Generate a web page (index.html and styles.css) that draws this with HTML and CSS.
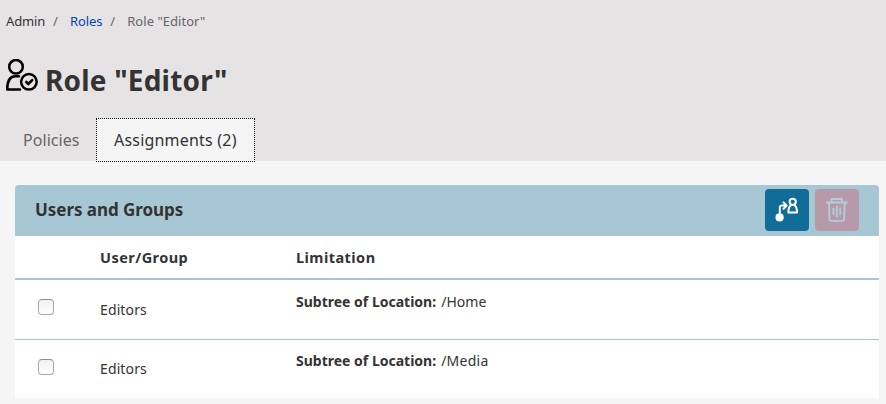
FILE: index.html
```html
<!DOCTYPE html>
<html lang="en">
<head>
<meta charset="utf-8">
<title>Role "Editor"</title>
<link rel="stylesheet" href="styles.css">
</head>
<body>
<header class="page-header">
  <nav class="breadcrumb">
    <span class="crumb-root">Admin</span><span class="sep">/</span><a class="crumb-link" href="#">Roles</a><span class="sep">/</span><span class="crumb-current">Role "Editor"</span>
  </nav>
  <div class="title-row">
    <svg class="title-icon" viewBox="0 0 32 32" fill="none" stroke="#000" stroke-width="2.5" stroke-linecap="round" stroke-linejoin="round">
      <circle cx="10" cy="7.8" r="6.8"/>
      <path d="M13 17.3H9.5C4.5 17.3 1.2 21 1.2 30.5H14"/>
      <circle cx="22.9" cy="22.8" r="7.8"/>
      <path d="M20.3 23l2 2 3.9-3.9" stroke-width="2.6"/>
    </svg>
    <h1 class="title">Role "Editor"</h1>
  </div>
  <div class="tabs">
    <a class="tab" href="#">Policies</a>
    <a class="tab tab-active" href="#">Assignments (2)</a>
  </div>
</header>
<main class="panel">
  <div class="panel-head">
    <h2 class="panel-title">Users and Groups</h2>
    <button class="btn btn-assign" aria-label="Assign">
      <svg width="24" height="26" viewBox="0 0 24 26" fill="none" stroke="#fff" stroke-width="2" stroke-linejoin="round" stroke-linecap="round">
        <circle cx="4.6" cy="20.4" r="4.1" fill="#fff" stroke="none"/>
        <path d="M4.8 18v-7.2q0-2.2 2.2-2.2h4.5M8.5 5.4l3.2 3.2-3.2 3.2"/>
        <circle cx="17.7" cy="4.8" r="3.1"/>
        <path d="M16 8.3c-2 1-2.6 4-2.6 7.2h8.6c0-3.2-.6-6.2-2.6-7.2"/>
      </svg>
    </button>
    <button class="btn btn-delete" aria-label="Delete">
      <svg width="24" height="26" viewBox="0 0 24 26" fill="none" stroke="#b5cedb" stroke-width="1.8" stroke-linejoin="round">
        <path d="M1 5.5h21.6M6.5 5V2h10.6V5M4 6l.5 16.6q0 1.2 1.2 1.2h12.2q1.2 0 1.2-1.2l.5-16.6"/>
        <path d="M8.5 10.8v7.4M11.8 8.8v11.4M15.2 10.8v7.4" stroke-width="1.8"/>
      </svg>
    </button>
  </div>
  <div class="row row-head"><span></span><span>User/Group</span><span>Limitation</span></div>
  <div class="row"><input class="check" type="checkbox" aria-label="Editors"><span class="name">Editors</span><span class="limit"><b>Subtree of Location:</b><span class="path">/Home</span></span></div>
  <div class="row row-last"><input class="check" type="checkbox" aria-label="Editors"><span class="name">Editors</span><span class="limit"><b>Subtree of Location:</b><span class="path">/Media</span></span></div>
</main>
</body>
</html>
```
FILE: styles.css
```css
* { box-sizing: border-box; }
body {
  margin: 0;
  height: 404px;
  overflow: hidden;
  background: #f5f5f5;
  color: #333;
  font: 14px/20px "Noto Sans", sans-serif;
}
a { text-decoration: none; }
.page-header { height: 161px; background: #e5e3e4; }
.breadcrumb {
  display: flex;
  height: 43px;
  padding: 11px 0 0 6px;
  font-size: 13px;
  letter-spacing: -.05px;
  color: #666;
}
.crumb-root { color: #333; letter-spacing: -.15px; }
.crumb-link { color: #0645ad; letter-spacing: -.15px; }
.crumb-current { letter-spacing: .03px; }
.sep { width: 25px; padding-left: 8px; }
.title-row { display: flex; height: 75px; padding: 16px 0 0 6px; }
.title-icon { width: 32px; height: 32px; }
.title {
  margin: 1px 0 0 7px;
  font-size: 28px;
  line-height: 40px;
  letter-spacing: .2px;
}
.tabs { display: flex; height: 44px; padding-left: 5px; }
.tab {
  width: 92px;
  padding: 11px 0 0 18px;
  font-size: 16px;
  line-height: 22px;
  letter-spacing: .05px;
  color: #666;
}
.tab-active {
  width: 159px;
  padding: 10px 0 0 17px;
  margin-left: -1px;
  border: 1px dotted #111;
  background: #f5f5f5;
  color: #333;
  letter-spacing: .2px;
}
.panel {
  width: 864px;
  margin: 24px 0 0 15px;
  background: #fff;
  border-radius: 4px 4px 0 0;
  overflow: hidden;
}
.panel-head {
  display: flex;
  gap: 6px;
  height: 51px;
  padding: 4px 20px 0;
  background: #a8c7d4;
}
.panel-title {
  flex: 1;
  margin: 9px 0 0;
  font-size: 17px;
  line-height: 24px;
  letter-spacing: -.05px;
}
.btn {
  width: 44px;
  height: 42px;
  padding: 0;
  border: 0;
  border-radius: 4px;
  display: flex;
  align-items: center;
  justify-content: center;
}
.btn-assign { background: #116d98; }
.btn-delete { background: #b79aaa; }
.row {
  display: grid;
  grid-template-columns: 85px 196px 1fr;
  height: 60px;
  border-bottom: 1px solid #a8c7d4;
}
.row-head {
  height: 44px;
  padding-top: 11px;
  border-bottom-width: 2px;
  font-size: 14.5px;
  font-weight: 700;
  letter-spacing: .45px;
}
.row-last { height: 58px; border-bottom: 0; }
.check {
  appearance: none;
  width: 16px;
  height: 16px;
  margin: 19px 0 0 23px;
  border: 1px solid #aaa;
  border-top-color: #8f8f8f;
  border-radius: 4px;
  background: linear-gradient(#f0f0f0, #fff);
}
.name { padding-top: 20px; letter-spacing: .12px; }
.limit { padding-top: 12px; }
.path { margin-left: 5px; letter-spacing: .05px; }
.row-last .name { padding-top: 19px; }
.row-last .limit { padding-top: 11px; }
.row-last .path { letter-spacing: .25px; }
```
